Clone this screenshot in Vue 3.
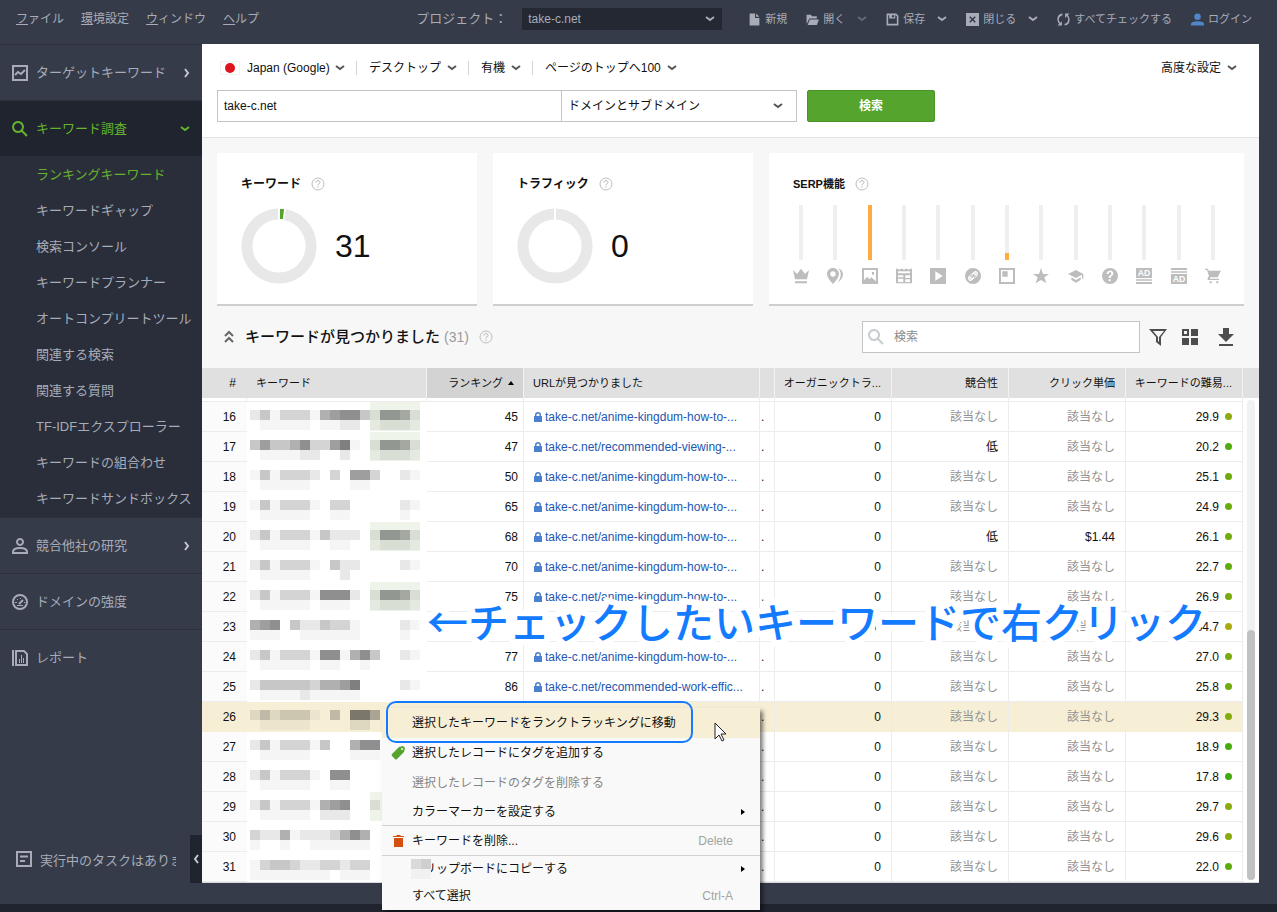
<template>
  <div class="app">
    <header class="topBar">
      <nav class="mainMenu">
        <button v-for="m in menus" :key="m" type="button"><u>{{ m[0] }}</u>{{ m.slice(1) }}</button>
      </nav>
      <div class="project">
        <label for="project">プロジェクト：</label>
        <div class="selectBox dark">
          <select id="project"><option>take-c.net</option></select>
          <svg class="chevron" viewBox="0 0 10 6"><path d="M1 1l4 3 4-3" /></svg>
        </div>
      </div>
      <div class="tools">
        <button v-for="t in tools" :key="t.label" type="button" :class="{ login: t.icon === 'user' }">
          <svg class="toolIcon" viewBox="0 0 24 24"><path fill-rule="evenodd" :d="icons[t.icon]" /></svg>
          <span>{{ t.label }}</span>
          <svg v-if="t.more" class="chevron" :class="{ faint: t.faint }" viewBox="0 0 10 6"><path d="M1 1l4 3 4-3" /></svg>
        </button>
      </div>
    </header>

    <div class="body">
      <aside class="sidebar">
        <a href="#" class="navItem">
          <svg class="navIcon" viewBox="0 0 16 16"><path class="line" d="M1 1h14v14H1zM3 10l3-3 3 2 4-4" /></svg>
          <span>ターゲットキーワード</span>
          <svg class="arrow" viewBox="0 0 6 10"><path d="M1 1l3 4-3 4" /></svg>
        </a>
        <a href="#" class="navItem active">
          <svg class="navIcon" viewBox="0 0 16 16"><path class="line" d="M6 1a5 5 0 1 0 .01 0zM9.500 9.500L15 15" /></svg>
          <span>キーワード調査</span>
          <svg class="chevron" viewBox="0 0 10 6"><path d="M1 1l4 3 4-3" /></svg>
        </a>
        <ul class="subNav">
          <li v-for="(s, index) in subItems" :key="s">
            <a href="#" :class="{ current: index === 0 }">{{ s }}</a>
          </li>
        </ul>
        <a href="#" class="navItem">
          <svg class="navIcon" viewBox="0 0 16 16"><path class="line" d="M8 1a3 3 0 1 0 .01 0zM1 15v-1q0-4 7-4t7 4v1z" /></svg>
          <span>競合他社の研究</span>
          <svg class="arrow" viewBox="0 0 6 10"><path d="M1 1l3 4-3 4" /></svg>
        </a>
        <a href="#" class="navItem">
          <svg class="navIcon" viewBox="0 0 16 16">
            <circle class="line" cx="8" cy="8" r="7" />
            <path class="line" d="M7 10l4-4" />
            <path class="fill" d="M3 8h2v1H3zM5 5h1v1H5zM8 4h1v1H8zM12 8h1v1h-1zM5 11h6v1H5z" />
          </svg>
          <span>ドメインの強度</span>
        </a>
        <a href="#" class="navItem">
          <svg class="navIcon" viewBox="0 0 16 16">
            <path class="line" d="M1 0v16M4 1h8l3 3v11H4z" />
            <path class="fill" d="M7 9h1v4H7zM9 5h1v8H9zM11 8h1v5h-1z" />
          </svg>
          <span>レポート</span>
        </a>
        <div class="tasks">
          <svg class="navIcon" viewBox="0 0 16 16"><path class="line" d="M1 1h14v14H1zM4 5.500h8M4 10h5" /></svg>
          <span>実行中のタスクはありません</span>
          <button type="button" aria-label="閉じる"><svg class="arrow" viewBox="0 0 6 10"><path d="M5 1L2 5l3 4" /></svg></button>
        </div>
      </aside>

      <main class="main">
        <section class="query">
          <div class="filters">
            <svg class="flag" viewBox="0 0 20 14"><path fill="#fff" stroke="#f2f2f2" d="M.5.5h19v13H.5z" /><circle cx="10" cy="7" r="5" fill="#e0121f" /></svg>
            <div v-for="f in filters" :key="f" class="filter">
              <select :aria-label="f"><option>{{ f }}</option></select>
              <svg class="chevron" viewBox="0 0 10 6"><path d="M1 1l4 3 4-3" /></svg>
            </div>
            <div class="filter advanced">
              <select aria-label="高度な設定"><option>高度な設定</option></select>
              <svg class="chevron" viewBox="0 0 10 6"><path d="M1 1l4 3 4-3" /></svg>
            </div>
          </div>
          <form class="searchRow" @submit.prevent>
            <input v-model="domain" type="text" aria-label="ドメイン">
            <div class="selectBox scope">
              <select aria-label="範囲"><option>ドメインとサブドメイン</option></select>
              <svg class="chevron" viewBox="0 0 10 6"><path d="M1 1l4 3 4-3" /></svg>
            </div>
            <button type="submit">検索</button>
          </form>
        </section>

        <section class="cards">
          <div class="card">
            <h3>キーワード <svg class="help" viewBox="0 0 14 14"><circle cx="7" cy="7" r="6" /><path d="M5 5.500Q5 3.500 7 3.500T9 5.500Q9 6.500 7 7.500V8.500M7 9.500V11" /></svg></h3>
            <div class="donutRow">
              <svg class="donut" viewBox="0 0 76 76">
                <circle cx="38" cy="38" r="32" />
                <path fill="#fff" d="M37 0h8l-2 13h-6z" />
                <path fill="#55a42e" d="M39 1h4l-1 10h-3z" />
              </svg>
              <strong>31</strong>
            </div>
          </div>
          <div class="card">
            <h3>トラフィック <svg class="help" viewBox="0 0 14 14"><circle cx="7" cy="7" r="6" /><path d="M5 5.500Q5 3.500 7 3.500T9 5.500Q9 6.500 7 7.500V8.500M7 9.500V11" /></svg></h3>
            <div class="donutRow">
              <svg class="donut" viewBox="0 0 76 76">
                <circle cx="38" cy="38" r="32" />
                <path fill="#fff" d="M37 0h2v13h-2z" />
              </svg>
              <strong>0</strong>
            </div>
          </div>
          <div class="card">
            <h3>SERP機能 <svg class="help" viewBox="0 0 14 14"><circle cx="7" cy="7" r="6" /><path d="M5 5.500Q5 3.500 7 3.500T9 5.500Q9 6.500 7 7.500V8.500M7 9.500V11" /></svg></h3>
            <div class="serp">
              <div v-for="s in serp" :key="s.icon" class="serpItem">
                <div class="bar"><div class="level" :style="{ height: s.level + '%' }"></div></div>
                <svg viewBox="0 0 24 24">
                  <path fill-rule="evenodd" :d="icons[s.icon]" />
                  <text v-if="s.adY" x="12" :y="s.adY">AD</text>
                </svg>
              </div>
            </div>
          </div>
        </section>

        <section class="listHead">
          <svg class="collapse" viewBox="0 0 12 14"><path d="M2 6l4-4 4 4M2 12l4-4 4 4" /></svg>
          <h2>キーワードが見つかりました</h2>
          <span class="count">(31)</span>
          <svg class="help" viewBox="0 0 14 14"><circle cx="7" cy="7" r="6" /><path d="M5 5.500Q5 3.500 7 3.500T9 5.500Q9 6.500 7 7.500V8.500M7 9.500V11" /></svg>
          <div class="listSearch">
            <svg viewBox="0 0 16 16"><path d="M6 1a5 5 0 1 0 .01 0zM9.500 9.500L15 15" /></svg>
            <input type="text" placeholder="検索" aria-label="検索">
          </div>
          <button type="button" aria-label="フィルター"><svg viewBox="0 0 18 18"><path fill-rule="evenodd" d="M0 1h18l-6 8v9l-5-4V9zM4 3l5 6v4l1 1V9l5-6z" /></svg></button>
          <button type="button" aria-label="表示"><svg viewBox="0 0 18 18"><path fill-rule="evenodd" d="M1 1h7v7H1zM3 3v3h3V3zM10 1h7v7h-7zM1 10h7v7H1zM10 10h7v7h-7z" /></svg></button>
          <button type="button" aria-label="ダウンロード"><svg viewBox="0 0 18 18"><path d="M6 0h6v6h5l-8 8-8-8h5zM2 16h14v2H2z" /></svg></button>
        </section>

        <section class="results">
          <table>
            <colgroup>
              <col class="cNum"><col class="cKey"><col class="cRank"><col><col class="cDot">
              <col class="cStat"><col class="cStat"><col class="cStat"><col class="cStat">
            </colgroup>
            <thead>
              <tr>
                <th class="num">#</th>
                <th class="left">キーワード</th>
                <th class="sorted">ランキング <svg viewBox="0 0 6 4"><path d="M3 0l3 4H0z" /></svg></th>
                <th class="left">URLが見つかりました</th>
                <th></th>
                <th>オーガニックトラ...</th>
                <th>競合性</th>
                <th>クリック単価</th>
                <th>キーワードの難易...</th>
              </tr>
            </thead>
            <tbody>
              <tr class="cut"><td v-for="n in 9" :key="n"></td></tr>
              <tr v-for="row in rows" :key="row.id" :class="{ picked: row.id === 26 }">
                <td class="num">{{ row.id }}</td>
                <td class="keyword">
                  <svg viewBox="0 0 170 30">
                    <rect v-if="row.tagged" x="120" width="50" height="30" fill="#eef4ea" />
                    <rect v-for="(b, i) in blocks(row)" :key="i" :x="b.x" :y="b.y" width="10" height="10" :fill-opacity="b.alpha" />
                  </svg>
                </td>
                <td class="rank">{{ row.rank }}</td>
                <td class="url">
                  <a v-if="row.url" href="#"><svg viewBox="0 0 8 10"><path fill-rule="evenodd" d="M0 4h1V3a3 3 0 0 1 6 0v1h1v6H0zM2.500 4h3V3a1.500 1.500 0 0 0-3 0z" /></svg>take-c.net/{{ row.url }}...</a>
                </td>
                <td class="dotCell">.</td>
                <td>0</td>
                <td :class="{ none: !row.comp }">{{ row.comp || '該当なし' }}</td>
                <td :class="{ none: !row.cpc }">{{ row.cpc || '該当なし' }}</td>
                <td><span class="kd">{{ row.kd.toFixed(1) }}<i :style="{ background: kdColor(row.kd) }"></i></span></td>
              </tr>
            </tbody>
          </table>
          <div class="scroll">
            <div class="scrollHead"></div>
            <div class="track"><div class="thumb"></div></div>
          </div>
        </section>
      </main>
    </div>
    <div class="bottomStrip"></div>

    <div class="contextMenu">
      <button type="button" class="tall hot">選択したキーワードをランクトラッキングに移動</button>
      <button type="button" class="tall">
        <svg class="itemIcon" viewBox="0 0 14 14"><path fill="#55a42e" fill-rule="evenodd" d="M8 1l4-1 2 2-1 4-7 7q-1 1-2 0l-3-3q-1-1 0-2zM10 3a1 1 0 1 0 2 0 1 1 0 0 0-2 0z" /></svg>
        選択したレコードにタグを追加する
      </button>
      <button type="button" class="tall off">選択したレコードのタグを削除する</button>
      <button type="button">カラーマーカーを設定する<svg class="more" viewBox="0 0 4 6"><path d="M0 0l4 3-4 3z" /></svg></button>
      <button type="button" class="tall ruled">
        <svg class="itemIcon" viewBox="0 0 14 14"><path fill="#d4500f" d="M2 2h3l1-1h3l1 1h3v1H2zM3 4h9v9H3z" /></svg>
        キーワードを削除...<kbd>Delete</kbd>
      </button>
      <button type="button" class="ruled">クリップボードにコピーする<svg class="more" viewBox="0 0 4 6"><path d="M0 0l4 3-4 3z" /></svg>
        <svg class="smudge" viewBox="0 0 20 20"><path fill="#d9d9d9" d="M0 0h10v10H0z" /><path fill="#cfcfcf" d="M10 0h10v10H10z" /><path fill="#f1f1f1" d="M0 10h20v10H0z" /></svg>
      </button>
      <button type="button">すべて選択<kbd>Ctrl-A</kbd></button>
    </div>
    <div class="ring"></div>
    <svg class="pointer" viewBox="0 0 13 20"><path d="M1 1v16l4-4 3 6 2-1-3-6h5z" /></svg>
    <p class="note">←チェックしたいキーワードで右クリック</p>
  </div>
</template>

<script setup>
import { ref } from 'vue';

const domain = ref('take-c.net');

const menus = ['ファイル', '環境設定', 'ウィンドウ', 'ヘルプ'];

const tools = [
  { icon: 'file', label: '新規' },
  { icon: 'folder', label: '開く', more: true, faint: true },
  { icon: 'save', label: '保存', more: true },
  { icon: 'close', label: '閉じる', more: true },
  { icon: 'sync', label: 'すべてチェックする' },
  { icon: 'user', label: 'ログイン' },
];

const subItems = [
  'ランキングキーワード',
  'キーワードギャップ',
  '検索コンソール',
  'キーワードプランナー',
  'オートコンプリートツール',
  '関連する検索',
  '関連する質問',
  'TF-IDFエクスプローラー',
  'キーワードの組合わせ',
  'キーワードサンドボックス',
];

const filters = ['Japan (Google)', 'デスクトップ', '有機', 'ページのトップへ100'];

const serp = [
  { icon: 'crown', level: 0 },
  { icon: 'places', level: 0 },
  { icon: 'image', level: 100 },
  { icon: 'news', level: 0 },
  { icon: 'video', level: 0 },
  { icon: 'link', level: 0 },
  { icon: 'snippet', level: 12 },
  { icon: 'star', level: 0 },
  { icon: 'school', level: 0 },
  { icon: 'question', level: 0 },
  { icon: 'adTop', level: 0, adY: 12 },
  { icon: 'adBottom', level: 0, adY: 21 },
  { icon: 'cart', level: 0 },
];

const icons = {
  file: 'M3 1h10v8h8v14H3zM15 1l6 6h-6z',
  folder: 'M1 3h8l2 3h9v4H6L2 19H1zM7 12h17l-4 10H3z',
  save: 'M1 1h18l4 4v18H1zM4 4v16h16V6l-2-2h-1v6H6V4zM11 4v4h4V4z',
  close: 'M0 0h24v24H0zM6 8l4 4-4 4 2 2 4-4 4 4 2-2-4-4 4-4-2-2-4 4-4-4z',
  sync: 'M10 1v3C2 6 2 15 6 18l3-3v8H1l3-3C-2 13 0 2 10 1zM14 23v-3c8-2 8-11 4-14l-3 3V1h8l-3 3c6 7 4 18-6 19z',
  user: 'M12 1a6 6 0 0 1 0 12 6 6 0 0 1 0-12zM0 23v-3q0-5 12-5t12 5v3z',
  crown: 'M0 3l6 6 6-8 6 8 6-6-3 14H3zM3 20h18v3H3z',
  places: 'M9 0C4 0 0 4 0 9c0 6 9 15 9 15s9-9 9-15c0-5-4-9-9-9zM9 5a4 4 0 1 1 0 8 4 4 0 0 1 0-8zM17 0c9 4 10 14-1 22 6-9 6-15 1-22z',
  image: 'M0 0h24v24H0zM3 3v15l5-5 3 4 3-3 7 6V3zM15 6h3v4h-3z',
  news: 'M0 1h3l2 2 2-2h3l2 2 2-2h3l2 2 2-2h3v22H0zM3 5v3h18V5zM3 11v3h8v-3zM3 16v5h8v-5zM14 11v4h7v-4zM14 17v4h7v-4z',
  video: 'M0 0h24v24H0zM8 5v14l11-7z',
  link: 'M12 0a12 12 0 1 1 0 24 12 12 0 0 1 0-24zM10 8L6 12c-4 4 1 10 5 6l5-5c2-2 1-5-1-6l-1 2 1 2-6 6c-2 1-3-1-2-3l4-4zM14 16l4-4c4-4-1-10-5-6L8 11c-2 2-1 5 1 6l1-2-1-2 6-6c2-1 3 1 2 3l-4 4z',
  snippet: 'M0 0h24v24H0zM3 3v18h18V3zM5 5h8v8H5z',
  star: 'M12 0l3 9h9l-7 5 3 9-8-5-8 5 3-9-7-5h9z',
  school: 'M12 3L0 9l12 6 9-5v6h2V9zM5 14v4l7 4 7-4v-4l-7 4z',
  question: 'M12 0a12 12 0 1 1 0 24 12 12 0 0 1 0-24zM7 9h3c0-4 5-3 4 0-1 2-4 2-4 6h3c0-3 4-3 4-7 0-6-10-6-10 1zM10 17v3h3v-3z',
  adTop: 'M0 0h24v15H0zM0 17h24v2H0zM0 21h24v3H0z',
  adBottom: 'M0 0h24v3H0zM0 5h24v2H0zM0 9h24v15H0z',
  cart: 'M0 1h4l2 3h18l-5 10H8l-1 2h14v2H4v-3l2-3L3 3H0zM7 20h3v3H7zM17 20h3v3h-3z',
};

const anime = 'anime-kingdum-how-to-';

const rows = [
  { id: 16, rank: 45, url: anime, kd: 29.9, tagged: true, top: 'ecfdddfba99ceaabe', low: '.fffff.ffee.feeef' },
  { id: 17, rank: 47, url: 'recommended-viewing-', comp: '低', kd: 20.2, tagged: true, top: 'caccb9dda8f.eaabe', low: '.ffffee..e..feeef' },
  { id: 18, rank: 50, url: anime, kd: 25.1, top: 'fcfddde.d.aad..ef', low: '.fffff....ff.....' },
  { id: 19, rank: 65, url: anime, kd: 24.9, top: 'fcfdddf.dd.....ef', low: '.fffff..ff.....f.' },
  { id: 20, rank: 68, url: anime, comp: '低', cpc: '$1.44', kd: 26.1, tagged: true, top: 'ecfdddfceee.eaabe', low: '.fffff..ff..feeef' },
  { id: 21, rank: 70, url: anime, kd: 22.7, top: 'ecfdddf.cee....ef', low: '.fffff...e.......' },
  { id: 22, rank: 75, url: anime, kd: 26.9, tagged: true, top: 'ecfdddf999e.eaabe', low: '.fffff.fff..feeef' },
  { id: 23, kd: 34.7, top: 'ba9.ceecddf....ef', low: 'fff..ffffff....f.' },
  { id: 24, rank: 77, url: anime, kd: 27.0, top: 'ecfdddf99fb9c..ef', low: '.fffff.ff..f.....' },
  { id: 25, rank: 86, url: 'recommended-work-effic', kd: 25.8, top: 'ecccccdbba8....ef', low: '.ffffefffff......' },
  { id: 26, kd: 29.3, top: 'ecedddf.c.88b....', low: '.fffff....ee.....' },
  { id: 27, kd: 18.9, top: 'ecfdddfc..b99....', low: '.fffff....fff....' },
  { id: 28, kd: 17.8, top: 'ecfdddf.99.......', low: '.fffff..ff.......' },
  { id: 29, kd: 29.7, tagged: true, top: 'ecfdddfba9..e....', low: '.fffff.eee.......' },
  { id: 30, kd: 29.6, top: 'deebfeeedb9b.....', low: 'f..f..ffffff.....' },
  { id: 31, kd: 22.0, top: 'fdccdeeddedd.....', low: 'ffffffff.fff.....' },
];

const shades = { f: 0.04, e: 0.09, d: 0.17, c: 0.22, b: 0.31, a: 0.38, 9: 0.44, 8: 0.5 };

// hidden keywords are drawn as two lines of 10px squares
const blocks = (row) => {
  const list = [];
  [row.top, row.low].forEach((line, n) => {
    [...line].forEach((c, i) => {
      if (shades[c]) list.push({ x: i * 10, y: 8 + n * 10, alpha: shades[c] });
    });
  });
  return list;
};

const kdColor = (kd) => `hsl(${Math.round(141 - kd * 2.3)}, 86%, 36%)`;
</script>

<style>
body {
  background: #353b49;
}
</style>

<style scoped>
.app {
  position: relative;
  display: flex;
  flex-direction: column;
  min-height: 100vh;
  overflow: hidden;
  font-family: "Liberation Sans", "Noto Sans CJK JP", sans-serif;
  font-size: 12px;
  line-height: 18px;
  color: #111;
}

.app *,
.app {
  box-sizing: border-box;
}

button,
select,
input {
  margin: 0;
  padding: 0;
  border: 0;
  border-radius: 0;
  background: none;
  color: inherit;
  font: inherit;
  outline: 0;
  appearance: none;
}

a {
  color: inherit;
  text-decoration: none;
}

svg {
  display: block;
  flex: none;
}

.chevron {
  width: 10px;
  height: 6px;
  fill: none;
  stroke: currentColor;
  stroke-width: 2;
  pointer-events: none;
}

.chevron.faint {
  opacity: 0.4;
}

.arrow {
  width: 6px;
  height: 10px;
  fill: none;
  stroke: #c4c8d0;
  stroke-width: 2;
}

/* top bar */
.topBar {
  display: flex;
  align-items: center;
  height: 44px;
  padding: 0 25px 6px 16px;
  color: #a7acb8;
}

.mainMenu {
  display: flex;
  gap: 17px;
}

.project {
  display: flex;
  align-items: center;
  margin-left: auto;
  margin-right: 26px;
  gap: 15px;
}

.project label {
  font-size: 13px;
}

.selectBox {
  display: flex;
  align-items: center;
  position: relative;
}

.selectBox select {
  width: 100%;
  height: 100%;
  padding: 0 24px 0 6px;
}

.selectBox .chevron {
  position: absolute;
  right: 13px;
}

.dark {
  width: 200px;
  height: 22px;
  background: #232833;
}

.dark .chevron {
  right: 7px;
}

.tools {
  display: flex;
  gap: 19px;
  font-size: 11px;
}

.tools button {
  display: flex;
  align-items: center;
  gap: 4px;
}

.tools .chevron {
  margin-left: 8px;
}

.toolIcon {
  width: 13px;
  height: 13px;
  fill: #a7acb8;
}

.login .toolIcon {
  fill: #4f86c9;
}

/* sidebar */
.body {
  display: flex;
  flex: 1;
  padding: 0 18px 21px 0;
}

.sidebar {
  display: flex;
  flex-direction: column;
  flex: none;
  width: 202px;
  color: #a7acb8;
  font-size: 13px;
}

.navItem {
  display: flex;
  align-items: center;
  height: 56px;
  padding: 0 12px;
  gap: 8px;
  border-top: 1px solid #2b303c;
}

.navItem span {
  flex: 1;
}

.active {
  background: #1f242f;
  color: #66b32e;
}

.navIcon {
  width: 16px;
  height: 16px;
  overflow: visible;
}

.navIcon .line {
  fill: none;
  stroke: currentColor;
  stroke-width: 2;
}

.navIcon .fill {
  fill: currentColor;
}

.subNav {
  margin: 0;
  padding: 1px 0 0;
  list-style: none;
  background: #292e3a;
}

.subNav a {
  display: block;
  padding-left: 36px;
  line-height: 36px;
  white-space: nowrap;
}

.subNav .current {
  color: #66b32e;
}

.tasks {
  display: flex;
  align-items: center;
  height: 48px;
  margin-top: auto;
  padding-left: 16px;
  gap: 8px;
}

.tasks span {
  flex: 1;
  min-width: 0;
  padding-top: 4px;
  overflow: hidden;
  white-space: nowrap;
}

.tasks button {
  display: flex;
  align-items: center;
  justify-content: center;
  width: 12px;
  height: 48px;
  margin-left: 6px;
  background: #1f242f;
}

/* main panel */
.main {
  flex: 1;
  min-width: 0;
  background: #f7f7f7;
}

.query {
  padding: 14px 15px 15px;
  background: #fff;
  border-bottom: 1px solid #e2e2e2;
}

.filters {
  display: flex;
  align-items: center;
  height: 20px;
  margin-bottom: 12px;
  padding: 0 7px 0 3px;
}

.flag {
  width: 20px;
  height: 14px;
  margin-right: 7px;
}

.filter {
  display: flex;
  align-items: center;
  gap: 5px;
  height: 14px;
  margin-right: 12px;
  padding-right: 11px;
  border-right: 1px solid #d5d5d5;
}

.filter:nth-of-type(4),
.filter.advanced {
  border-right: 0;
}

.filter.advanced {
  margin: 0 0 0 auto;
  padding: 0;
}

.filter select {
  height: 20px;
}

.filter .chevron,
.scope .chevron {
  color: #555;
}

.searchRow {
  display: grid;
  grid-template-columns: 345fr 235fr 138fr 309fr;
  height: 32px;
}

.searchRow input {
  min-width: 0;
  padding: 0 6px;
  border: 1px solid #c4c4c4;
}

.scope {
  border: 1px solid #c4c4c4;
  border-left: 0;
}

.searchRow button {
  margin-left: 10px;
  border: 1px solid #4a9427;
  border-radius: 2px;
  background: #55a42e;
  color: #fff;
  font-weight: bold;
}

.cards {
  display: grid;
  grid-template-columns: 260fr 260fr 475fr;
  gap: 16px;
  padding: 15px 15px 0;
}

.card {
  height: 153px;
  padding: 21px 23px 0 24px;
  background: #fff;
  border-bottom: 2px solid #cfcfcf;
}

.card h3 {
  display: flex;
  align-items: center;
  gap: 10px;
  margin: 0;
  font-size: 12px;
  line-height: 20px;
}

.card:nth-child(3) h3 {
  font-size: 11px;
}

.help {
  width: 14px;
  height: 14px;
  fill: none;
  stroke: #bdbdbd;
}

.donutRow {
  display: flex;
  align-items: center;
  gap: 18px;
  margin-top: 14px;
}

.donut {
  width: 76px;
  height: 76px;
}

.donut circle {
  fill: none;
  stroke: #e8e8e8;
  stroke-width: 11;
}

.donutRow strong {
  font-size: 32px;
  font-weight: normal;
  line-height: 40px;
}

.serp {
  display: flex;
  justify-content: space-between;
  margin-top: 11px;
}

.serpItem {
  display: flex;
  flex-direction: column;
  align-items: center;
  gap: 8px;
  width: 16px;
}

.bar {
  display: flex;
  align-items: flex-end;
  width: 4px;
  height: 55px;
  background: #efefef;
}

.level {
  width: 4px;
  background: #ffab40;
}

.serpItem svg {
  width: 16px;
  height: 16px;
  fill: #bdbdbd;
}

.serpItem text {
  fill: #fff;
  font-size: 13px;
  font-weight: bold;
  text-anchor: middle;
}

.listHead {
  display: flex;
  align-items: center;
  height: 62px;
  padding: 0 24px 0 21px;
}

.collapse {
  width: 12px;
  height: 14px;
  fill: none;
  stroke: #666;
  stroke-width: 2;
}

.listHead h2 {
  margin: 0 4px 0 10px;
  font-size: 15px;
  font-weight: 500;
  line-height: 22px;
}

.count {
  margin-right: 10px;
  color: #9a9a9a;
  font-size: 14px;
}

.listSearch {
  display: flex;
  align-items: center;
  width: 278px;
  height: 32px;
  margin-left: auto;
  padding: 0 5px;
  gap: 10px;
  background: #fff;
  border: 1px solid #c4c4c4;
}

.listSearch svg {
  width: 16px;
  height: 16px;
  fill: none;
  stroke: #c8ccd0;
  stroke-width: 2;
}

.listSearch input {
  flex: 1;
  min-width: 0;
}

.listSearch input::placeholder {
  color: #8a8a8a;
}

.listHead button {
  margin-left: 9px;
}

.listHead button + button {
  margin-left: 14px;
}

.listHead button:last-child {
  margin-left: 18px;
}

.listHead button svg {
  width: 18px;
  height: 18px;
  fill: #4d4d4d;
}

/* results */
.results {
  display: flex;
  background: #fff;
  border-bottom: 1px solid #d8dade;
}

table {
  flex: 1;
  table-layout: fixed;
  border-collapse: separate;
  border-spacing: 0;
}

.cNum { width: 45px; }
.cKey { width: 180px; }
.cRank { width: 97px; }
.cDot { width: 15px; }
.cStat { width: 117px; }

th,
td {
  height: 30px;
  padding: 0 10px 0 0;
  text-align: right;
  white-space: nowrap;
  overflow: hidden;
}

th {
  border-right: 1px solid #f2f2f2;
  background: #e0e0e0;
  font-size: 11px;
  font-weight: normal;
}

th.num,
td.num {
  padding-right: 11px;
  border-right: 0;
}

th.num {
  font-size: 12px;
}

th.left {
  padding: 0 0 0 9px;
  text-align: left;
}

th.sorted {
  padding-right: 9px;
  background: #d3d3d3;
}

.sorted svg {
  display: inline-block;
  width: 6px;
  height: 4px;
  margin-left: 2px;
  vertical-align: 2px;
}

td {
  border-right: 1px solid #ececec;
  border-bottom: 1px solid #ececec;
}

.cut td {
  height: 4px;
}

td.keyword {
  padding: 0 0 0 3px;
  border-color: transparent;
}

.keyword svg {
  width: 170px;
  height: 30px;
  margin-bottom: -1px;
}

td.num {
  background: #fbfbfb;
}

td.rank {
  padding-right: 5px;
}

td.url {
  padding: 0 0 0 10px;
  text-align: left;
  color: #2456b0;
}

.url a {
  display: flex;
  align-items: center;
  gap: 3px;
}

.url svg {
  width: 8px;
  height: 10px;
  fill: #4a80cf;
}

td.dotCell {
  padding: 0 0 0 1px;
  text-align: left;
}

td.none {
  color: #929292;
}

.kd {
  display: flex;
  align-items: center;
  justify-content: flex-end;
  gap: 6px;
}

.kd i {
  width: 7px;
  height: 7px;
  border-radius: 50%;
}

.picked td,
.picked td.num {
  background: #f6eed5;
  border-bottom-color: #f6eed5;
}

.scroll {
  display: flex;
  flex-direction: column;
  width: 16px;
}

.scrollHead {
  height: 30px;
  background: #e0e0e0;
}

.track {
  display: flex;
  flex: 1;
  flex-direction: column;
  justify-content: flex-end;
  width: 8px;
  margin: 2px 4px;
  border-radius: 4px;
  background: #f1f1f1;
}

.thumb {
  height: 52%;
  border-radius: 4px;
  background: #c1c1c1;
}

.bottomStrip {
  height: 8px;
  background: #1f242f;
}

/* layers over the table */
.contextMenu {
  position: absolute;
  top: 708px;
  left: 382px;
  width: 378px;
  padding-bottom: 1px;
  background: #f9f9f9;
  box-shadow: 3px 3px 4px rgba(0, 0, 0, 0.5);
}

.contextMenu button {
  display: flex;
  align-items: center;
  position: relative;
  width: 100%;
  height: 27px;
  padding: 0 15px 0 30px;
}

.contextMenu button.tall {
  height: 30px;
}

.contextMenu .hot {
  background: #f6eed5;
}

.contextMenu .off {
  color: #848484;
}

.contextMenu .ruled {
  border-top: 1px solid #d2d2d2;
}

.itemIcon {
  position: absolute;
  left: 9px;
  width: 14px;
  height: 14px;
}

.more {
  width: 4px;
  height: 6px;
  margin-left: auto;
}

.contextMenu kbd {
  margin: 0 12px 0 auto;
  color: #a3a3a3;
  font-family: inherit;
  font-size: 12px;
}

.smudge {
  position: absolute;
  left: 29px;
  width: 20px;
  height: 20px;
}

.ring {
  position: absolute;
  top: 701px;
  left: 386px;
  width: 307px;
  height: 42px;
  border: 2px solid #137bff;
  border-radius: 10px;
  pointer-events: none;
}

.pointer {
  position: absolute;
  top: 722px;
  left: 714px;
  width: 13px;
  height: 20px;
  fill: #fff;
  stroke: #222;
}

.note {
  position: absolute;
  top: 590px;
  left: 427px;
  margin: 0;
  color: #137bff;
  font-family: "Noto Sans CJK JP", sans-serif;
  font-size: 41px;
  font-weight: 500;
  line-height: 60px;
  white-space: nowrap;
  -webkit-text-stroke: 12px #fff;
  paint-order: stroke fill;
  pointer-events: none;
}
</style>
